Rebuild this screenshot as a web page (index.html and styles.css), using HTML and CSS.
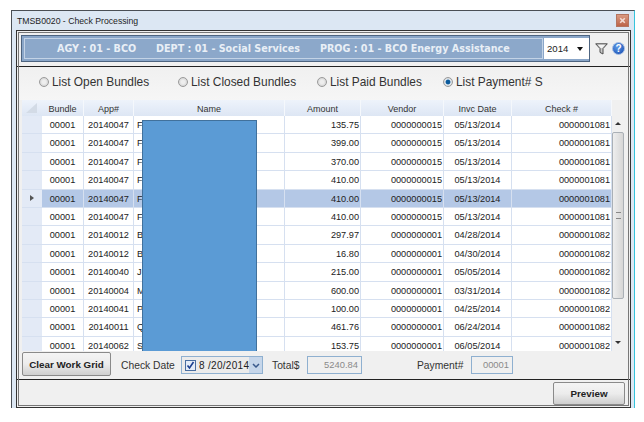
FILE: index.html
```html
<!DOCTYPE html>
<html lang="en">
<head>
  <meta charset="UTF-8" />
  <title>TMSB0020 - Check Processing</title>
  <link rel="stylesheet" href="styles.css">
</head>
<body>

  <div class="window">
    <div class="titlebar">
      <span class="title">TMSB0020 - Check Processing</span>
      <span class="close">
        <svg width="7" height="7" viewBox="0 0 7 7"><path d="M1.2 1.2l4.6 4.6M5.8 1.2l-4.6 4.6" stroke="#f3dcd4" stroke-width="1.6"/></svg>
      </span>
    </div>

    <div class="panel">
      <div class="banner">
        <div class="banner-inner">
          <div class="banner-text">
            <span class="agy">AGY : 01 - BCO</span>
            <span class="dept">DEPT : 01 - Social Services</span>
            <span>PROG : 01 - BCO Energy Assistance</span>
          </div>
          <div class="year">2014<i class="arrow"></i></div>
        </div>
        <svg class="filter" width="13" height="12" viewBox="0 0 13 12"><path d="M.7.8h11.6L8 5.6v5.4l-3-1.6V5.6z" fill="#c9c9c9" stroke="#4c4c4c"/><path d="M3 1.8h7L7.2 5H5.8z" fill="#f4f4f4"/></svg>
        <svg class="help" width="13" height="13" viewBox="0 0 13 13"><defs><radialGradient id="helpfill" cx=".4" cy=".35" r=".7"><stop offset="0" stop-color="#5f9ae6"/><stop offset="1" stop-color="#1f55b8"/></radialGradient></defs><circle cx="6.5" cy="6.5" r="6" fill="url(#helpfill)" stroke="#a9c0e2"/><text x="6.5" y="10" text-anchor="middle" class="help-q">?</text></svg>
      </div>

      <div class="radios">
        <label class="radio r1"><i class="dot"></i>List Open Bundles</label>
        <label class="radio r2"><i class="dot"></i>List Closed Bundles</label>
        <label class="radio r3"><i class="dot"></i>List Paid Bundles</label>
        <label class="radio"><i class="dot on"></i>List Payment# S</label>
      </div>

      <div class="grid-wrap">
        <div class="grid">
          <div class="row head">
            <div class="rh corner"><svg width="12" height="10" viewBox="0 0 12 10"><path d="M11 0v10H0z" fill="#d3dbe6"/></svg></div>
            <div>Bundle</div><div>App#</div><div>Name</div><div>Amount</div><div>Vendor</div><div>Invc Date</div><div>Check #</div>
          </div>
          <div class="row"><div class="rh"></div><div class="c">00001</div><div class="c">20140047</div><div>F</div><div class="n">135.75</div><div class="n">0000000015</div><div class="c">05/13/2014</div><div class="n">0000001081</div></div>
          <div class="row"><div class="rh"></div><div class="c">00001</div><div class="c">20140047</div><div>F</div><div class="n">399.00</div><div class="n">0000000015</div><div class="c">05/13/2014</div><div class="n">0000001081</div></div>
          <div class="row"><div class="rh"></div><div class="c">00001</div><div class="c">20140047</div><div>F</div><div class="n">370.00</div><div class="n">0000000015</div><div class="c">05/13/2014</div><div class="n">0000001081</div></div>
          <div class="row"><div class="rh"></div><div class="c">00001</div><div class="c">20140047</div><div>F</div><div class="n">410.00</div><div class="n">0000000015</div><div class="c">05/13/2014</div><div class="n">0000001081</div></div>
          <div class="row selected"><div class="rh"><i class="pointer"></i></div><div class="c">00001</div><div class="c">20140047</div><div>F</div><div class="n">410.00</div><div class="n">0000000015</div><div class="c">05/13/2014</div><div class="n">0000001081</div></div>
          <div class="row"><div class="rh"></div><div class="c">00001</div><div class="c">20140047</div><div>F</div><div class="n">410.00</div><div class="n">0000000015</div><div class="c">05/13/2014</div><div class="n">0000001081</div></div>
          <div class="row"><div class="rh"></div><div class="c">00001</div><div class="c">20140012</div><div>B</div><div class="n">297.97</div><div class="n">0000000001</div><div class="c">04/28/2014</div><div class="n">0000001082</div></div>
          <div class="row"><div class="rh"></div><div class="c">00001</div><div class="c">20140012</div><div>B</div><div class="n">16.80</div><div class="n">0000000001</div><div class="c">04/30/2014</div><div class="n">0000001082</div></div>
          <div class="row"><div class="rh"></div><div class="c">00001</div><div class="c">20140040</div><div>J</div><div class="n">215.00</div><div class="n">0000000001</div><div class="c">05/05/2014</div><div class="n">0000001082</div></div>
          <div class="row"><div class="rh"></div><div class="c">00001</div><div class="c">20140004</div><div>M</div><div class="n">600.00</div><div class="n">0000000001</div><div class="c">03/31/2014</div><div class="n">0000001082</div></div>
          <div class="row"><div class="rh"></div><div class="c">00001</div><div class="c">20140041</div><div>P</div><div class="n">100.00</div><div class="n">0000000001</div><div class="c">04/25/2014</div><div class="n">0000001082</div></div>
          <div class="row"><div class="rh"></div><div class="c">00001</div><div class="c">20140011</div><div>Q</div><div class="n">461.76</div><div class="n">0000000001</div><div class="c">06/24/2014</div><div class="n">0000001082</div></div>
          <div class="row"><div class="rh"></div><div class="c">00001</div><div class="c">20140062</div><div>S</div><div class="n">153.75</div><div class="n">0000000001</div><div class="c">06/05/2014</div><div class="n">0000001082</div></div>
        </div>
        <div class="scrollbar">
          <i class="up"></i>
          <div class="thumb"><span class="grip"></span></div>
          <i class="down"></i>
        </div>
        <div class="redact"></div>
      </div>

      <div class="actions">
        <button class="btn clear">Clear Work Grid</button>
        <span class="lbl date-lbl">Check Date</span>
        <div class="datebox">
          <span class="check"><svg width="9" height="9" viewBox="0 0 9 9"><path d="M1.5 4.5l2 2.5 4-6" fill="none" stroke="#1b3f8f" stroke-width="1.6"/></svg></span>
          <span class="date-val">8 /20/2014</span>
          <span class="drop"><svg width="8" height="5" viewBox="0 0 8 5"><path d="M1 1l3 3 3-3" fill="none" stroke="#3a5a8c" stroke-width="1.5"/></svg></span>
        </div>
        <span class="lbl total-lbl">Total$</span>
        <div class="ro total">5240.84</div>
        <span class="lbl pay-lbl">Payment#</span>
        <div class="ro pay">00001</div>
      </div>

      <div class="footer">
        <button class="btn preview">Preview</button>
      </div>
    </div>
  </div>

</body>
</html>
```

FILE: styles.css
```css
/* Base */
body {
  margin: 0;
  background: #fff;
  font-family: 'Liberation Sans', Arial, sans-serif;
  font-size: 10px;
  color: #222;
  width: 644px;
  height: 422px;
  overflow: hidden;
  padding: 10px 0 0 11px;
  box-sizing: border-box;
}
i {
  display: block;
}

/* Window */
.window {
  width: 624px;
  height: 398px;
  box-sizing: border-box;
  background: #dce7f3;
  border: 1px solid #4a4f55;
  border-bottom: none;
  border-right: 1px solid #35c4dc;
  padding: 0 3px 0 4px;
}
.titlebar {
  height: 19px;
  display: flex;
  align-items: center;
  justify-content: space-between;
}
.title {
  font-size: 8.7px;
  color: #1e1e1e;
  margin-left: 1px;
}
.close {
  width: 13px;
  height: 13px;
  margin-right: 2px;
  margin-bottom: 1px;
  background: linear-gradient(#d99a82, #bd6448);
  border: 1px solid #b4745f;
  box-sizing: border-box;
  display: flex;
  align-items: center;
  justify-content: center;
}

.panel {
  height: 378px;
  box-sizing: border-box;
  border: 1px solid #333;
  outline: 1px solid #777;
  outline-offset: -3px;
  background: #f0f0f0;
  display: flex;
  flex-direction: column;
}

/* Banner */
.banner {
  height: 36px;
  flex: none;
  box-sizing: border-box;
  border-bottom: 1px solid #222;
  background: #f0f0f0;
  display: flex;
  align-items: center;
  padding: 0 4px 0 4px;
}
.banner-inner {
  width: 569px;
  height: 27px;
  box-sizing: border-box;
  border: 1px solid #4d6480;
  background: #8aa6c8;
  display: flex;
  align-items: stretch;
  padding: 2px 0 2px 2px;
}
.banner-text {
  flex: 1;
  background: #8ca8ca;
  border: 1px solid #c3d3e6;
  color: #e9eff6;
  font-family: 'DejaVu Sans', Verdana, sans-serif;
  font-size: 9.6px;
  font-weight: bold;
  display: flex;
  align-items: center;
  padding-left: 32px;
  white-space: nowrap;
}
.dept {
  margin: 0 20px;
}
.year {
  width: 45px;
  background: #fff;
  margin-left: 1px;
  font-size: 9.6px;
  display: flex;
  align-items: center;
  justify-content: space-between;
  padding: 0 6px 0 3px;
  box-sizing: border-box;
}
.arrow {
  width: 0;
  height: 0;
  border: 3.5px solid transparent;
  border-top: 4px solid #111;
  border-bottom: none;
}
.filter {
  margin-left: 5px;
}
.help {
  margin-left: 4px;
}
.help-q {
  font-family: 'Liberation Sans', sans-serif;
  font-size: 10px;
  font-weight: bold;
  fill: #fff;
}

/* Radios */
.radios {
  height: 33px;
  flex: none;
  box-sizing: border-box;
  padding: 0 0 4px 22px;
  display: flex;
  align-items: center;
  font-size: 11.9px;
  color: #333;
  background: linear-gradient(#f0f0f0, #f6f6f6);
}
.radio {
  display: flex;
  align-items: center;
  gap: 3px;
  white-space: nowrap;
}
.r1 { width: 139px; }
.r2 { width: 139px; }
.r3 { width: 126px; }
.dot {
  width: 10px;
  height: 10px;
  border-radius: 50%;
  box-sizing: border-box;
  border: 1px solid #9a9a9a;
  background: radial-gradient(circle, #eee 30%, #c8c8c8 100%);
}
.dot.on {
  background: radial-gradient(circle, #0a5a9c 0 35%, #dfe6ec 50%, #c8c8c8 100%);
}

/* Grid */
.grid-wrap {
  position: relative;
  height: 251px;
  flex: none;
  display: flex;
  padding-left: 5px;
  overflow: hidden;
}
.grid {
  width: 590px;
  flex: none;
  background: #fff;
}
.row {
  display: grid;
  grid-template-columns: 20px 42px 50px 151px 76px 83px 68px 100px;
  height: 18.4px;
  box-sizing: border-box;
  border-bottom: 1px solid #d6e0f0;
  font-size: 9.2px;
  line-height: 19px;
  color: #222;
}
.row > div {
  border-right: 1px solid #d6e0f0;
  padding: 0 3px;
  white-space: nowrap;
  overflow: hidden;
}
.row .c {
  text-align: center;
  padding: 0;
}
.row .n {
  text-align: right;
  padding-right: 1px;
}
.row .rh {
  background: #e3eaf6;
  padding: 0;
  display: flex;
  align-items: center;
  justify-content: center;
  border-right: none;
}
.row.head {
  height: 16px;
  background: linear-gradient(#eef3fb, #dde6f4);
  line-height: 18px;
  font-size: 9px;
  color: #333;
  text-align: center;
  border-bottom: none;
}
.head > div {
  border-right-color: #f5f8fc;
}
.row .corner {
  background: none;
}
.selected {
  background: #b4c8e6;
}
.pointer {
  width: 0;
  height: 0;
  border: 3.5px solid transparent;
  border-left: 4px solid #555;
  border-right: none;
}
.scrollbar {
  width: 13px;
  background: #f0f0f0;
  position: relative;
  box-sizing: border-box;
}
.thumb {
  position: absolute;
  top: 32px;
  left: 0;
  width: 12px;
  height: 167px;
  box-sizing: border-box;
  border: 1px solid #aab0b6;
  border-radius: 2px;
  background: linear-gradient(90deg, #eee, #d6d6d6);
  display: flex;
  align-items: center;
  justify-content: center;
}
.grip {
  width: 5px;
  height: 5px;
  border-top: 1px solid #888;
  border-bottom: 1px solid #888;
}
.up, .down {
  position: absolute;
  left: 3px;
  width: 0;
  height: 0;
  border: 3px solid transparent;
}
.up {
  top: 22px;
  border-bottom: 3px solid #333;
  border-top: none;
}
.down {
  bottom: 7px;
  border-top: 3px solid #333;
  border-bottom: none;
}

/* redacted names */
.redact {
  position: absolute;
  left: 125px;
  top: 20px;
  width: 115px;
  height: 231px;
  background: #5b9bd5;
  border: 1px solid #41719c;
  border-bottom: none;
  box-sizing: border-box;
}

/* Bottom controls */
.actions {
  height: 29px;
  flex: none;
  display: flex;
  align-items: center;
  box-sizing: border-box;
  border-bottom: 1px solid #222;
  padding-left: 5px;
  font-size: 10.3px;
}
.btn {
  font-family: 'Liberation Sans', Arial, sans-serif;
  font-size: 9.8px;
  font-weight: bold;
  color: #222;
  border: 1px solid #8a8a8a;
  border-radius: 2px;
  background: linear-gradient(#f4f4f4, #ececec 50%, #cfcfcf);
  padding: 0;
}
.clear {
  width: 89px;
  height: 24px;
  margin-bottom: 2px;
}
.lbl {
  color: #333;
  white-space: nowrap;
}
.date-lbl {
  margin-left: 10px;
  width: 60px;
}
.datebox {
  width: 82px;
  height: 18px;
  box-sizing: border-box;
  border: 1px solid #8fb0d0;
  background: #ebebeb;
  display: flex;
  align-items: center;
  overflow: hidden;
}
.check {
  width: 11px;
  height: 11px;
  margin-left: 3px;
  border: 1px solid #4a6ea0;
  box-sizing: border-box;
  display: flex;
  align-items: center;
  justify-content: center;
  background: #e4ecf8;
  flex: none;
}
.date-val {
  margin-left: 3px;
  width: 50px;
  overflow: hidden;
  white-space: nowrap;
  font-size: 10px;
  letter-spacing: .3px;
  flex: none;
}
.drop {
  width: 13px;
  height: 16px;
  margin-left: auto;
  background: #c6d6ea;
  display: flex;
  align-items: center;
  justify-content: center;
}
.total-lbl {
  margin-left: 9px;
  width: 35px;
}
.ro {
  height: 18px;
  box-sizing: border-box;
  border: 1px solid #8fb0d0;
  background: #f0f0f0;
  color: #8a8a8a;
  font-size: 9.4px;
  line-height: 16px;
  text-align: right;
  padding-right: 3px;
}
.total {
  width: 55px;
}
.pay-lbl {
  margin-left: 55px;
  width: 54px;
}
.pay {
  width: 42px;
}

/* Footer */
.footer {
  flex: 1;
  display: flex;
  justify-content: flex-end;
  align-items: center;
  padding-right: 5px;
  background: #f0f0f0;
}
.preview {
  width: 72px;
  height: 23px;
}
```
